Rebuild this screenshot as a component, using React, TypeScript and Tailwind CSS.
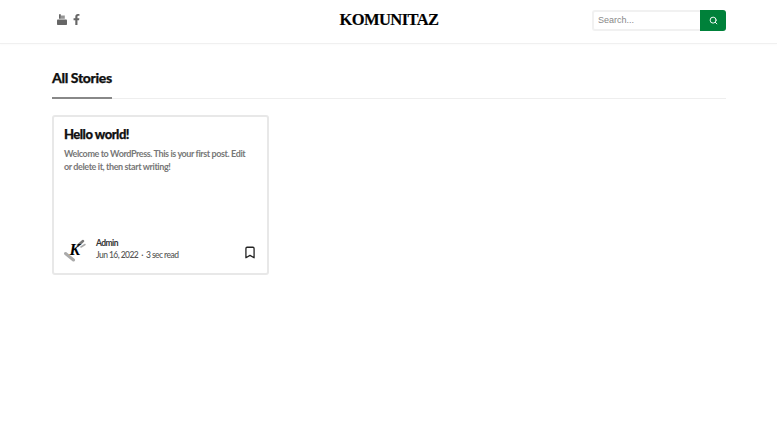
import { FaFacebookF } from 'react-icons/fa';
import { Search, Bookmark } from 'lucide-react';

const YoutubeOld = () => (
  <svg width="10" height="11" viewBox="0 0 10 11" className="text-[#666]" fill="currentColor">
    <path d="M0.8 5.500h8.400c.5 0 .8.3.8.8v3.900c0 .5-.3.8-.8.8H.8c-.5 0-.8-.3-.8-.8V6.300c0-.5.3-.8.8-.8z" />
    <path d="M2 .2h1.800v4.600H2z" />
    <path d="M3.800 1.500h4v3.300h-4z" opacity="0.7" />
  </svg>
);

const AvatarLogo = () => (
  <svg width="23" height="24" viewBox="0 0 23 24">
    <path d="M14 7.500 L19 3" stroke="#777" strokeWidth="2.500" strokeLinecap="round" />
    <path d="M17 9 L21 6.500" stroke="#aaa" strokeWidth="1.500" strokeLinecap="round" />
    <path d="M1.500 15.500 L9.500 22" stroke="#aaa" strokeWidth="3" strokeLinecap="round" />
    <text x="5.500" y="17" fontFamily="'Liberation Serif', serif" fontWeight="700" fontStyle="italic" fontSize="16" fill="#000">K</text>
  </svg>
);

export default function App() {
  return (
    <div className="min-h-[423px] bg-white font-['Lato',sans-serif]">
      <header className="h-[44px] border-b border-[#f0f0f0] shadow-[0_1px_2px_rgba(0,0,0,0.02)] pl-[52px] pr-[51px] grid grid-cols-3 items-center">
        <div className="flex items-center gap-[5px] pl-[5px] pb-[4px]">
          <YoutubeOld />
          <FaFacebookF className="w-[9px] h-[11px] text-[#666]" />
        </div>
        <div className="text-center font-['Liberation_Serif',serif] font-bold text-[16.500px] tracking-[-0.6px] text-black leading-none pb-[3px] [-webkit-text-stroke:0.15px_black]">
          KOMUNITAZ
        </div>
        <div className="flex justify-end pb-[3px]">
          <input
            placeholder="Search..."
            className="w-[108px] h-[21px] px-[4px] border-2 border-[#f1f1f1] border-r-0 rounded-l-[3px] font-['Liberation_Sans',sans-serif] text-[9px] outline-none placeholder:text-[#888]"
          />
          <button className="w-[26px] h-[21px] bg-[#00813a] rounded-r-[3px] flex items-center justify-center">
            <Search className="w-[9px] h-[9px] text-white" strokeWidth={2.5} />
          </button>
        </div>
      </header>

      <main className="pl-[52px] pr-[51px] pt-[23px]">
        <div className="border-b border-[#eeeeee] h-[32px]">
          <div className="w-[60px] h-[30px] border-b-2 border-[#888] box-content">
            <h2 className="font-black text-[14px] leading-[22px] tracking-[-0.35px] text-[#111] whitespace-nowrap [-webkit-text-stroke:0.25px_#111]">All Stories</h2>
          </div>
        </div>

        <article className="mt-[16px] w-[217px] h-[160px] border-2 border-[#e8e8e8] rounded-[3px] pt-[8px] px-[10px] flex flex-col">
          <h3 className="font-black text-[13px] leading-[18px] tracking-[-0.5px] text-[#111] [-webkit-text-stroke:0.25px_#111]">Hello world!</h3>
          <p className="mt-[4px] pr-[6px] text-[9px] leading-[13px] tracking-[-0.4px] font-bold text-[#777]">
            Welcome to WordPress. This is your first post. Edit or delete it, then start writing!
          </p>
          <div className="mt-auto mb-[11px] flex items-center">
            <AvatarLogo />
            <div className="ml-[9px] -mt-[2px] text-[8.500px] leading-[12px] tracking-[-0.55px] whitespace-nowrap">
              <div className="font-bold text-[#333]">Admin</div>
              <div className="font-medium text-[#555]">
                Jun 16, 2022<span className="mx-[3px]">·</span>3 sec read
              </div>
            </div>
            <Bookmark className="ml-auto mt-[5px] w-[14px] h-[15px] text-[#222]" strokeWidth={2.200} />
          </div>
        </article>
      </main>
    </div>
  );
}
